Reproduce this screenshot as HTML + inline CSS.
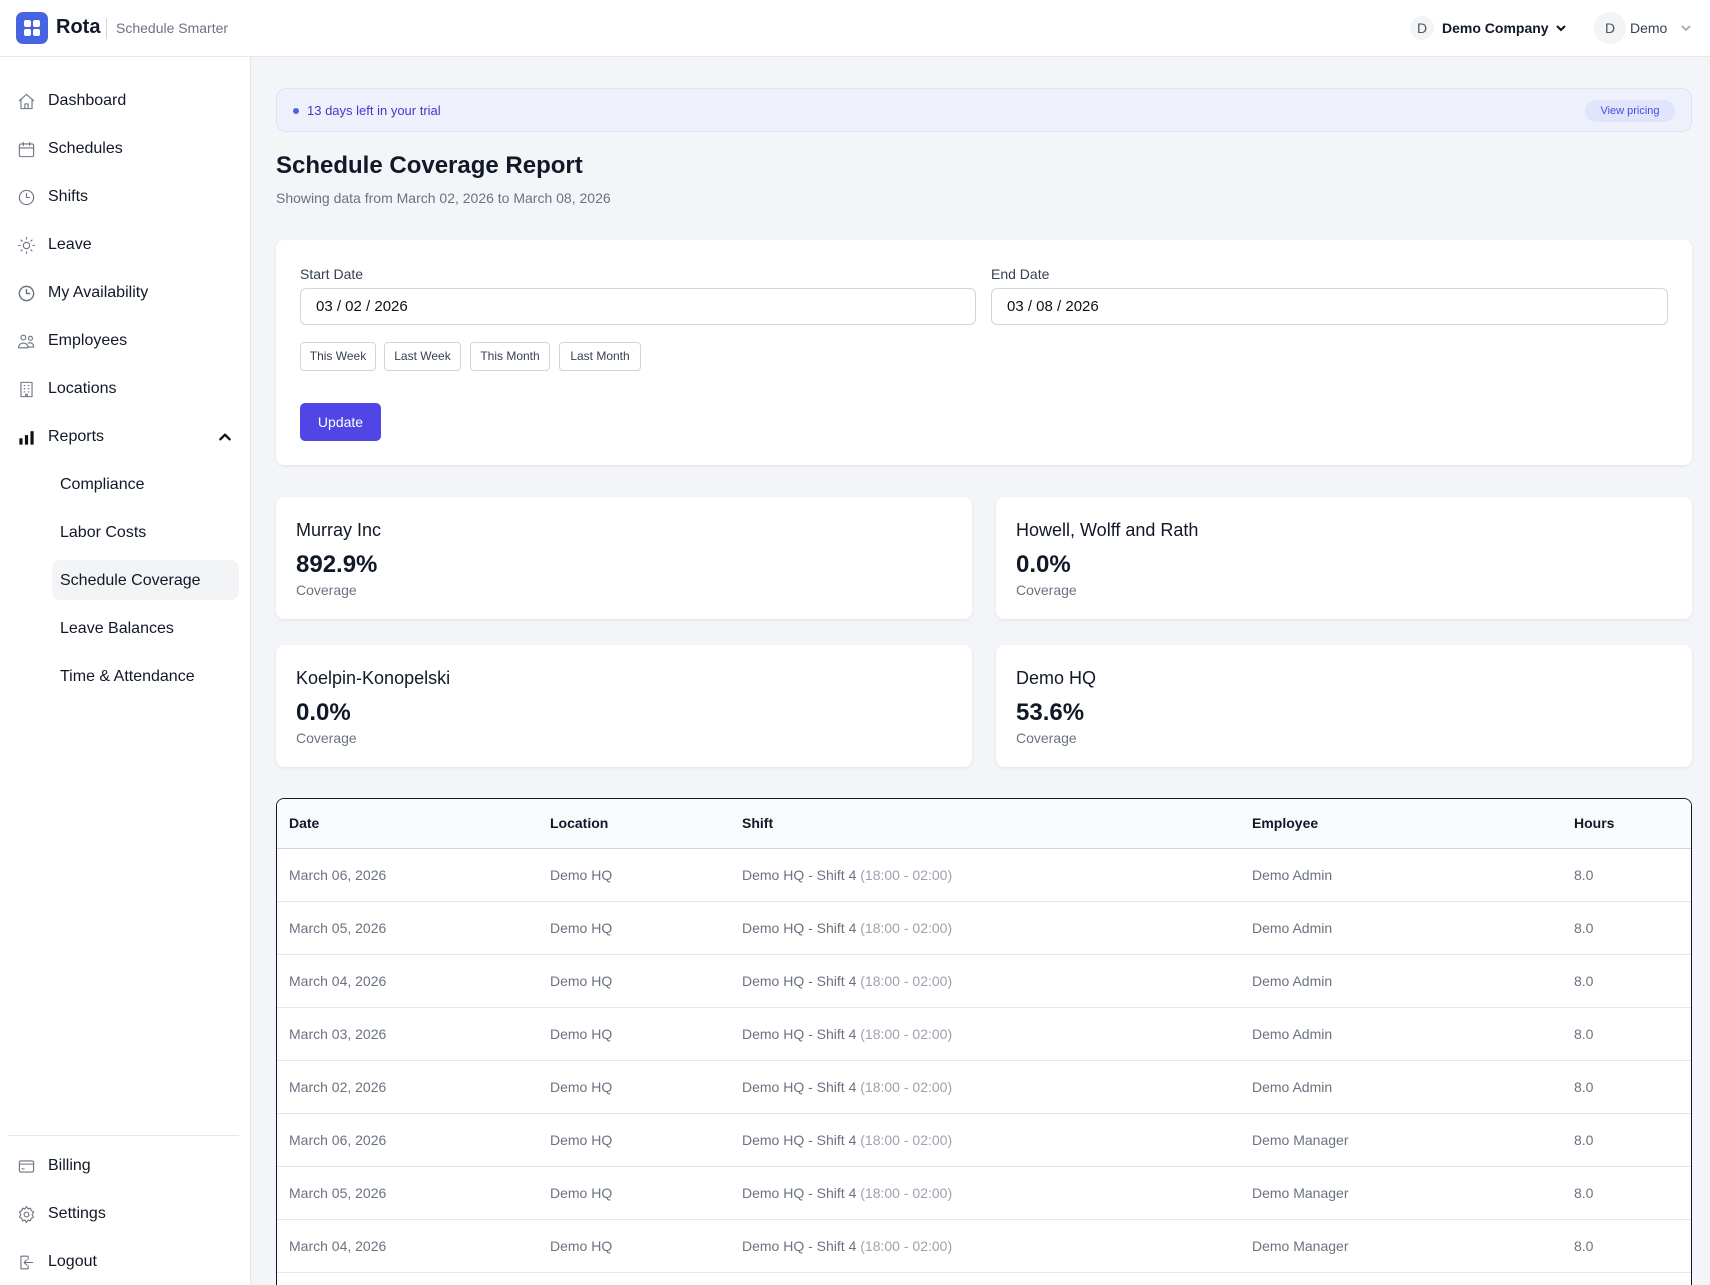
<!DOCTYPE html>
<html><head><meta charset="utf-8">
<style>
*{box-sizing:border-box;margin:0;padding:0}
html,body{width:1710px;height:1285px;overflow:hidden}
body{background:#f4f5f9;font-family:"Liberation Sans",sans-serif;color:#111827}
#wrap{position:relative;width:1710px;height:1285px;overflow:hidden}
.abs{position:absolute}
.hdr{left:0;top:0;width:1710px;height:57px;background:#fff;border-bottom:1px solid #e5e7eb}
.side{left:0;top:57px;width:251px;height:1228px;background:#fff;border-right:1px solid #e5e7eb}
.nav{position:absolute;left:0;height:40px;width:250px;display:flex;align-items:center;font-size:16px;font-weight:500;color:#111827}
.nav svg{position:absolute;left:17px;width:19px;height:19px;fill:none;stroke:#6b7280;stroke-width:1.4;stroke-linecap:round;stroke-linejoin:round}
.nav span{position:absolute;left:48px;white-space:nowrap}
.sub{position:absolute;left:60px;font-size:16px;font-weight:500;height:40px;line-height:40px;white-space:nowrap}
.card{background:#fff;border-radius:8px;box-shadow:0 1px 3px rgba(0,0,0,.08)}
.lbl{font-size:14px;color:#374151;font-weight:500}
.inp{border:1px solid #d1d5db;border-radius:6px;height:37px;font-size:15px;padding-left:15px;line-height:35px;color:#111;background:#fff}
.qb{border:1px solid #d1d5db;border-radius:4px;height:29px;font-size:12px;line-height:27px;text-align:center;color:#374151;background:#fff}
.kn{font-size:18px;color:#111827}
.kp{font-size:24px;font-weight:700;color:#111827}
.kc{font-size:14px;color:#6b7280}
table{border-collapse:collapse;width:100%}
th{font-size:14px;font-weight:700;text-align:left;height:49px;background:#f9fafb;border-bottom:1px solid #d1d5db;color:#111827}
td{font-size:14px;color:#6b7280;height:53px;border-bottom:1px solid #e5e7eb}
.g{color:#9ca3af}
</style></head><body><div id="wrap">
<div class="abs hdr">
  <div class="abs" style="left:16px;top:12px;width:32px;height:32px;border-radius:7px;background:#4763e4">
    <div class="abs" style="left:8px;top:8px;width:7px;height:7px;background:#fff;border-radius:2px"></div>
    <div class="abs" style="left:17px;top:8px;width:7px;height:7px;background:#fff;border-radius:2px"></div>
    <div class="abs" style="left:8px;top:17px;width:7px;height:7px;background:#fff;border-radius:2px"></div>
    <div class="abs" style="left:17px;top:17px;width:7px;height:7px;background:#fff;border-radius:2px"></div>
  </div>
  <div class="abs" style="left:56px;top:16px;font-size:20px;font-weight:700">Rota</div>
  <div class="abs" style="left:106px;top:18px;width:1px;height:21px;background:#d1d5db"></div>
  <div class="abs" style="left:116px;top:20px;font-size:14px;color:#6b7280">Schedule Smarter</div>
  <div class="abs" style="left:1410px;top:16px;width:24px;height:24px;border-radius:50%;background:#f3f4f6;font-size:14px;color:#4b5563;text-align:center;line-height:24px">D</div>
  <div class="abs" style="left:1442px;top:20px;font-size:14px;font-weight:700">Demo Company</div>
  <svg class="abs" style="left:1555px;top:23px" width="12" height="10" viewBox="0 0 12 10"><path d="M2 3l4 4 4-4" fill="none" stroke="#111" stroke-width="2"/></svg>
  <div class="abs" style="left:1594px;top:12px;width:32px;height:32px;border-radius:50%;background:#f3f4f6;font-size:14px;color:#4b5563;text-align:center;line-height:32px">D</div>
  <div class="abs" style="left:1630px;top:20px;font-size:14px;color:#374151">Demo</div>
  <svg class="abs" style="left:1680px;top:23px" width="12" height="10" viewBox="0 0 12 10"><path d="M2 3l4 4 4-4" fill="none" stroke="#9ca3af" stroke-width="1.6"/></svg>
</div>

<div class="abs side">
  <div class="nav" style="top:24px"><svg viewBox="0 0 24 24"><path d="M3 11l9-8 9 8M5 9v12h14V9M10 21v-6h4v6"/></svg><span>Dashboard</span></div>
  <div class="nav" style="top:72px"><svg viewBox="0 0 24 24"><rect x="3" y="5" width="18" height="16" rx="2"/><path d="M3 10h18M8 3v4M16 3v4"/></svg><span>Schedules</span></div>
  <div class="nav" style="top:120px"><svg viewBox="0 0 24 24"><circle cx="12" cy="12" r="9"/><path d="M12 7v5h4"/></svg><span>Shifts</span></div>
  <div class="nav" style="top:168px"><svg viewBox="0 0 24 24"><circle cx="12" cy="12" r="4"/><path d="M12 2v2M12 20v2M2 12h2M20 12h2M5 5l1.5 1.5M17.5 17.5L19 19M5 19l1.5-1.5M17.5 6.5L19 5"/></svg><span>Leave</span></div>
  <div class="nav" style="top:216px"><svg viewBox="0 0 24 24" style="stroke-width:1.8"><circle cx="12" cy="12" r="9"/><path d="M12 7v5h4"/></svg><span>My Availability</span></div>
  <div class="nav" style="top:264px"><svg viewBox="0 0 24 24"><circle cx="8" cy="7" r="3"/><circle cx="17" cy="8" r="2.5"/><path d="M2 20c0-4 3-6 6-6s6 2 6 6zM14 14c3-1 7 0 7 5h-6"/></svg><span>Employees</span></div>
  <div class="nav" style="top:312px"><svg viewBox="0 0 24 24"><rect x="5" y="3" width="14" height="18"/><path d="M9 7h1M14 7h1M9 11h1M14 11h1M9 15h1M14 15h1M11 21v-3h2v3"/></svg><span>Locations</span></div>
  <div class="nav" style="top:360px"><svg viewBox="0 0 24 24" style="stroke:none;fill:#111"><rect x="3" y="13" width="4" height="8"/><rect x="10" y="9" width="4" height="12"/><rect x="17" y="4" width="4" height="17"/></svg><span>Reports</span>
    <svg viewBox="0 0 12 10" style="left:218px;width:14px;height:12px;stroke:#111;stroke-width:2"><path d="M2 7l4-4 4 4"/></svg></div>
  <div class="sub" style="top:408px">Compliance</div>
  <div class="sub" style="top:456px">Labor Costs</div>
  <div class="abs" style="left:52px;top:503px;width:187px;height:40px;background:#f3f4f6;border-radius:8px"></div>
  <div class="sub" style="top:504px">Schedule Coverage</div>
  <div class="sub" style="top:552px">Leave Balances</div>
  <div class="sub" style="top:600px">Time &amp; Attendance</div>
  <div class="abs" style="left:8px;top:1078px;width:231px;height:1px;background:#e5e7eb"></div>
  <div class="nav" style="top:1089px"><svg viewBox="0 0 24 24"><rect x="3" y="5" width="18" height="14" rx="2"/><path d="M3 9h18M6 15h3"/></svg><span>Billing</span></div>
  <div class="nav" style="top:1137px"><svg viewBox="0 0 24 24"><circle cx="12" cy="12" r="3"/><path d="M12 2l2 3 3-1 1 3 3 2-2 3 2 3-3 2-1 3-3-1-2 3-2-3-3 1-1-3-3-2 2-3-2-3 3-2 1-3 3 1z"/></svg><span>Settings</span></div>
  <div class="nav" style="top:1185px"><svg viewBox="0 0 24 24"><path d="M14 8V4H5v16h9v-4M20 12H9M12 9l-3 3 3 3"/></svg><span>Logout</span></div>
</div>

<div class="abs" style="left:276px;top:88px;width:1416px;height:44px;background:#eef1fb;border:1px solid #dde3fb;border-radius:10px">
  <div class="abs" style="left:16px;top:19px;width:6px;height:6px;border-radius:50%;background:#4f5fe0"></div>
  <div class="abs" style="left:30px;top:14px;font-size:13px;color:#4338ca">13 days left in your trial</div>
  <div class="abs" style="right:16px;top:11px;width:90px;height:22px;border-radius:11px;background:#e0e5fc;font-size:11px;color:#4f46e5;text-align:center;line-height:22px">View pricing</div>
</div>
<div class="abs" style="left:276px;top:152px;font-size:24px;font-weight:700">Schedule Coverage Report</div>
<div class="abs" style="left:276px;top:190px;font-size:14px;color:#6b7280">Showing data from March 02, 2026 to March 08, 2026</div>

<div class="abs card" style="left:276px;top:240px;width:1416px;height:225px">
  <div class="abs lbl" style="left:24px;top:26px">Start Date</div>
  <div class="abs inp" style="left:24px;top:48px;width:676px">03 / 02 / 2026</div>
  <div class="abs lbl" style="left:715px;top:26px">End Date</div>
  <div class="abs inp" style="left:715px;top:48px;width:677px">03 / 08 / 2026</div>
  <div class="abs qb" style="left:24px;top:102px;width:76px">This Week</div>
  <div class="abs qb" style="left:108px;top:102px;width:77px">Last Week</div>
  <div class="abs qb" style="left:194px;top:102px;width:80px">This Month</div>
  <div class="abs qb" style="left:283px;top:102px;width:82px">Last Month</div>
  <div class="abs" style="left:24px;top:163px;width:81px;height:38px;background:#4f46e5;border-radius:5px;color:#fff;font-size:14px;font-weight:500;text-align:center;line-height:38px">Update</div>
</div>

<div class="abs card" style="left:276px;top:497px;width:696px;height:122px">
  <div class="abs kn" style="left:20px;top:23px">Murray Inc</div><div class="abs kp" style="left:20px;top:54px">892.9%</div><div class="abs kc" style="left:20px;top:85px">Coverage</div></div>
<div class="abs card" style="left:996px;top:497px;width:696px;height:122px">
  <div class="abs kn" style="left:20px;top:23px">Howell, Wolff and Rath</div><div class="abs kp" style="left:20px;top:54px">0.0%</div><div class="abs kc" style="left:20px;top:85px">Coverage</div></div>
<div class="abs card" style="left:276px;top:645px;width:696px;height:122px">
  <div class="abs kn" style="left:20px;top:23px">Koelpin-Konopelski</div><div class="abs kp" style="left:20px;top:54px">0.0%</div><div class="abs kc" style="left:20px;top:85px">Coverage</div></div>
<div class="abs card" style="left:996px;top:645px;width:696px;height:122px">
  <div class="abs kn" style="left:20px;top:23px">Demo HQ</div><div class="abs kp" style="left:20px;top:54px">53.6%</div><div class="abs kc" style="left:20px;top:85px">Coverage</div></div>

<div class="abs" style="left:276px;top:798px;width:1416px;height:520px;background:#fff;border:1.5px solid #111827;border-radius:8px;overflow:hidden">
<table>
<colgroup><col style="width:273px"><col style="width:192px"><col style="width:510px"><col style="width:322px"><col></colgroup>
<tr><th style="padding-left:12px">Date</th><th>Location</th><th>Shift</th><th>Employee</th><th>Hours</th></tr>
<tr><td style="padding-left:12px">March 06, 2026</td><td>Demo HQ</td><td>Demo HQ - Shift 4 <span class="g">(18:00 - 02:00)</span></td><td>Demo Admin</td><td>8.0</td></tr>
<tr><td style="padding-left:12px">March 05, 2026</td><td>Demo HQ</td><td>Demo HQ - Shift 4 <span class="g">(18:00 - 02:00)</span></td><td>Demo Admin</td><td>8.0</td></tr>
<tr><td style="padding-left:12px">March 04, 2026</td><td>Demo HQ</td><td>Demo HQ - Shift 4 <span class="g">(18:00 - 02:00)</span></td><td>Demo Admin</td><td>8.0</td></tr>
<tr><td style="padding-left:12px">March 03, 2026</td><td>Demo HQ</td><td>Demo HQ - Shift 4 <span class="g">(18:00 - 02:00)</span></td><td>Demo Admin</td><td>8.0</td></tr>
<tr><td style="padding-left:12px">March 02, 2026</td><td>Demo HQ</td><td>Demo HQ - Shift 4 <span class="g">(18:00 - 02:00)</span></td><td>Demo Admin</td><td>8.0</td></tr>
<tr><td style="padding-left:12px">March 06, 2026</td><td>Demo HQ</td><td>Demo HQ - Shift 4 <span class="g">(18:00 - 02:00)</span></td><td>Demo Manager</td><td>8.0</td></tr>
<tr><td style="padding-left:12px">March 05, 2026</td><td>Demo HQ</td><td>Demo HQ - Shift 4 <span class="g">(18:00 - 02:00)</span></td><td>Demo Manager</td><td>8.0</td></tr>
<tr><td style="padding-left:12px">March 04, 2026</td><td>Demo HQ</td><td>Demo HQ - Shift 4 <span class="g">(18:00 - 02:00)</span></td><td>Demo Manager</td><td>8.0</td></tr>
<tr><td style="padding-left:12px">March 03, 2026</td><td>Demo HQ</td><td>Demo HQ - Shift 4 <span class="g">(18:00 - 02:00)</span></td><td>Demo Manager</td><td>8.0</td></tr>
</table>
</div>
</div></body></html>
